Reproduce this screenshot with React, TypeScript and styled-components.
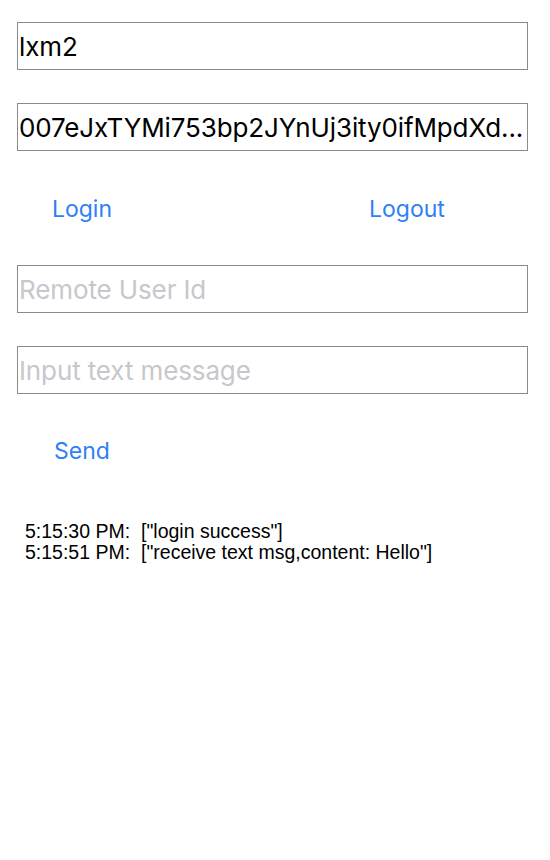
import React from "react";
import styled, { createGlobalStyle } from "styled-components";

const Global = createGlobalStyle`
  html, body { margin: 0; padding: 0; background: #fff; }
  body { font-family: "Inter", "Liberation Sans", sans-serif; }
`;

const Page = styled.div`
  display: flex;
  flex-direction: column;
  padding: 22px 22px 0 17px;
  width: 550px;
  box-sizing: border-box;
`;

const Field = styled.div<{ $placeholder?: boolean }>`
  height: 48px;
  box-sizing: border-box;
  border: 1px solid #8a8a8a;
  display: flex;
  align-items: center;
  padding: 0 0 0 1px;
  font-family: "Inter", "Liberation Sans", sans-serif;
  font-size: 26px;
  color: ${(p) => (p.$placeholder ? "#c7c7cd" : "#000")};
  white-space: nowrap;
  overflow: hidden;
  margin-bottom: 33px;
  letter-spacing: -0.12px;
`;

const ButtonRow = styled.div`
  display: flex;
  justify-content: space-between;
  height: 50px;
  margin-bottom: 31px;
  align-items: center;
`;

const TextButton = styled.div<{ $width: number }>`
  width: ${(p) => p.$width}px;
  text-align: center;
  color: #2f7ff5;
  font-family: "Inter", "Liberation Sans", sans-serif;
  font-size: 23px;
`;

const SendRow = styled.div`
  display: flex;
  height: 50px;
  align-items: center;
  margin-top: -1px;
`;

const Log = styled.div`
  margin-top: 45px;
  padding-left: 8px;
  font-family: "Liberation Sans", Arial, sans-serif;
  font-size: 19.5px;
  line-height: 21px;
  color: #000;
`;

const LogLine = styled.div`
  white-space: pre;
`;

export default function App() {
  return (
    <>
      <Global />
      <Page>
        <Field>lxm2</Field>
        <Field>007eJxTYMi753bp2JYnUj3ity0ifMpdXd...</Field>
        <ButtonRow>
          <TextButton $width={130}>Login</TextButton>
          <TextButton $width={130} style={{ marginRight: 56 }}>Logout</TextButton>
        </ButtonRow>
        <Field $placeholder>Remote User Id</Field>
        <Field $placeholder>Input text message</Field>
        <SendRow>
          <TextButton $width={130}>Send</TextButton>
        </SendRow>
        <Log>
          <LogLine>5:15:30 PM:  ["login success"]</LogLine>
          <LogLine>5:15:51 PM:  ["receive text msg,content: Hello"]</LogLine>
        </Log>
      </Page>
    </>
  );
}
